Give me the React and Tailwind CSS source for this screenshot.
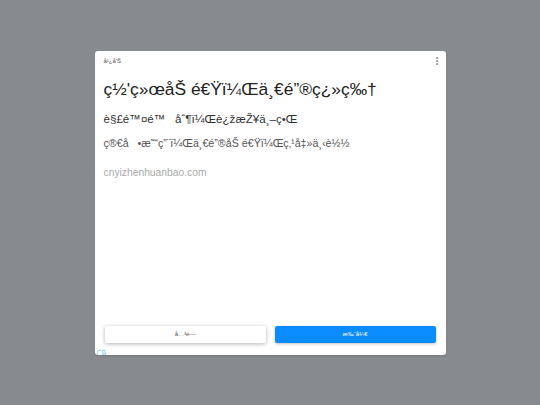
export default function App() {
  return (
    <div className="w-[540px] h-[405px] bg-[#878a8f] flex items-start justify-center pt-[51px]" style={{ fontFamily: '"Liberation Sans", Arial, sans-serif' }}>
      <div className="w-[351px] h-[304px] bg-white rounded-[3px] flex flex-col relative shadow-sm">
        <div className="flex items-center justify-between px-[9px] pt-[5px] h-[15px]">
          <span className="text-[6px] leading-none text-[#555]">å¹¿å'Š</span>
          <span className="flex flex-col gap-[1px] mr-[-1px]">
            <span className="w-[2px] h-[2px] bg-[#aaa]"></span>
            <span className="w-[2px] h-[2px] bg-[#aaa]"></span>
            <span className="w-[2px] h-[2px] bg-[#aaa]"></span>
          </span>
        </div>
        <div className="px-[9px] flex flex-col">
          <h1 className="mt-[12px] text-[17.4px] leading-[22px] text-[#222]">ç½'ç»œåŠ é€Ÿï¼Œä¸€é”®ç¿»ç‰†</h1>
          <p className="mt-[11px] text-[11.6px] leading-[16px] text-[#333] whitespace-pre">è§£é™¤é™   åˆ¶ï¼Œè¿žæŽ¥ä¸–ç•Œ</p>
          <p className="mt-[9px] text-[10.7px] leading-[14px] text-[#555] whitespace-pre">ç®€å   •æ˜“ç”¨ï¼Œä¸€é”®åŠ é€Ÿï¼Œç‚¹å‡»ä¸‹è½½</p>
          <p className="mt-[16px] text-[10.3px] leading-[14px] text-[#aaa]">cnyizhenhuanbao.com</p>
        </div>
        <div className="mt-auto flex gap-[9px] px-[10px] pb-[12px]">
          <button className="flex-1 h-[17px] bg-white rounded-[2px] shadow-[0_1px_4px_rgba(0,0,0,0.3)] text-[6px] text-[#555]">å…³é—­</button>
          <button className="flex-1 h-[17px] bg-[#0a8cff] rounded-[2px] shadow-[0_1px_3px_rgba(0,0,0,0.25)] text-[6px] text-white">æ‰“å¼€</button>
        </div>
        <span className="absolute left-[2px] bottom-[1px] text-[5px] leading-none text-[#2aa5e0]" style={{ fontFamily: '"Noto Sans CJK SC", sans-serif' }}>广告</span>
      </div>
    </div>
  );
}
